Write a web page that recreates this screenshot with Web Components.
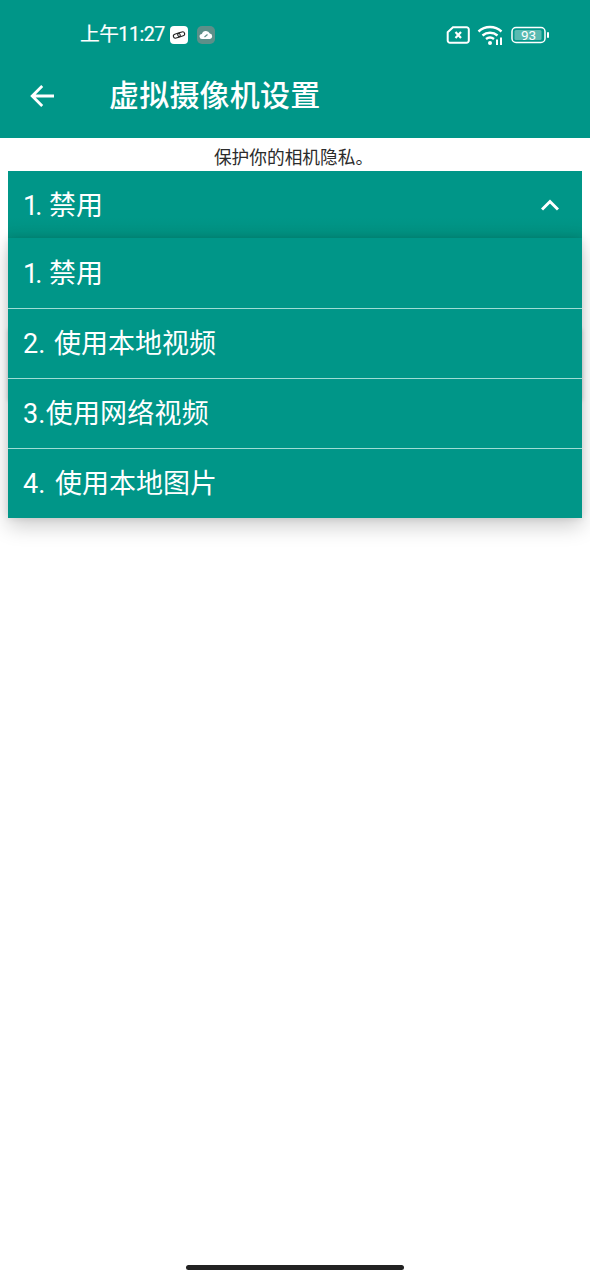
<!DOCTYPE html>
<html lang="zh">
<head>
<meta charset="utf-8">
<style>
html, body { margin: 0; padding: 0; background: #fff; }
body { width: 590px; height: 1280px; overflow: hidden; position: relative; font-family: Roboto, "Noto Sans CJK SC", sans-serif; }
.one { letter-spacing: -3px; }
</style>
</head>
<body>
<app-header title="虚拟摄像机设置"></app-header>
<hint-text>保护你的相机隐私。</hint-text>
<drop-select>
	<span slot="value"><span class="one">1</span>. 禁用</span>
	<drop-item><span class="one">1</span>. 禁用</drop-item>
	<drop-item style="word-spacing:2px">2. 使用本地视频</drop-item>
	<drop-item style="letter-spacing:0.2px">3.使用网络视频</drop-item>
	<drop-item style="word-spacing:3px">4. 使用本地图片</drop-item>
</drop-select>
<home-bar></home-bar>
<script>
class StatusBar extends HTMLElement {
	constructor() {
		super();
		this.attachShadow({ mode: "open" });
		this.shadowRoot.innerHTML = `<style>
:host { display: flex; align-items: center; height: 70px; box-sizing: border-box; padding: 0 41px 0 80px; color: #fff; }
#time { font-size: 19.700px; line-height: 70px; letter-spacing: -0.5px; -webkit-text-stroke: 0.2px #fff; }
#left { display: flex; align-items: center; }
#right { margin-left: auto; display: flex; align-items: center; }
svg { display: block; }
</style>
<div id="left">
	<span id="time">上午11:27</span>
	<svg style="margin-left:5px" width="18" height="18" viewBox="0 0 18 18">
		<rect width="18" height="18" rx="4" fill="#fff"/>
		<g fill="none" stroke="#222" stroke-width="1.100" transform="rotate(-18 9 9)">
			<rect x="3.200" y="7" width="7" height="4" rx="2"/>
			<rect x="7.800" y="7" width="7" height="4" rx="2"/>
		</g>
	</svg>
	<svg style="margin-left:9px" width="18" height="18" viewBox="0 0 18 18">
		<rect width="18" height="18" rx="5" fill="#5d8f89"/>
		<path d="M5.200 13a2.500 2.500 0 0 1-.3-5 4.200 4.200 0 0 1 7.900-.5 2.800 2.800 0 0 1 .2 5.500z" fill="#fff"/>
		<path d="M7.500 11l3-2.500" stroke="#5d8f89" stroke-width="1.100"/>
	</svg>
</div>
<div id="right">
	<svg width="24" height="18" viewBox="0 0 24 18">
		<path d="M7 1.200h13.500a2.300 2.300 0 0 1 2.300 2.300v11a2.300 2.300 0 0 1-2.300 2.300h-16.500a2.300 2.300 0 0 1-2.300-2.300v-8.300z" fill="none" stroke="#fff" stroke-width="2"/>
		<path d="M9.500 6l5.500 6M15 6l-5.500 6" stroke="#fff" stroke-width="2.200" fill="none"/>
	</svg>
	<svg style="margin-left:7px" width="28" height="22" viewBox="0 0 28 22">
		<g fill="none" stroke="#fff" stroke-width="2.400">
			<path d="M1.500 7.500a17 17 0 0 1 23 0"/>
			<path d="M5.500 11.500a11.500 11.500 0 0 1 15 0"/>
			<path d="M9 15a6.500 6.500 0 0 1 8 0"/>
		</g>
		<circle cx="13" cy="19" r="2" fill="#fff"/>
		<path d="M20 15.500v5.500M24 13.500v7.500" stroke="#fff" stroke-width="2" fill="none"/>
	</svg>
	<svg style="margin-left:6px" width="38" height="18" viewBox="0 0 38 18">
		<rect x="1" y="1.500" width="33" height="15" rx="4" fill="none" stroke="#fff" stroke-width="1.500"/>
		<rect x="3.500" y="4" width="27" height="10" rx="1.500" fill="#fff" fill-opacity="0.35"/>
		<rect x="36" y="6" width="2" height="6" rx="1" fill="#fff"/>
		<text x="17.500" y="13.800" text-anchor="middle" font-family="Roboto" font-size="13.500" fill="#fff">93</text>
	</svg>
</div>`;
	}
}
customElements.define("status-bar", StatusBar);

class AppHeader extends HTMLElement {
	constructor() {
		super();
		this.attachShadow({ mode: "open" });
		this.shadowRoot.innerHTML = `<style>
:host { display: block; background: #009688; color: #fff; height: 138px; }
#bar { display: flex; align-items: center; height: 52px; padding-left: 30px; }
#back { display: block; flex: none; width: 24px; height: 24px; }
h1 { margin: 0 0 0 55px; font-size: 30px; font-weight: 500; line-height: 52px; letter-spacing: 0.2px; }
</style>
<status-bar></status-bar>
<div id="bar">
	<svg id="back" viewBox="0 0 24 24" fill="none" stroke="#fff" stroke-width="2.800">
		<path d="M24 12H2.500M12.200 2L2.200 12l10 10"/>
	</svg>
	<h1></h1>
</div>`;
		this.shadowRoot.querySelector("h1").textContent = this.getAttribute("title");
	}
}
customElements.define("app-header", AppHeader);

class HintText extends HTMLElement {
	constructor() {
		super();
		this.attachShadow({ mode: "open" });
		this.shadowRoot.innerHTML = `<style>
:host { display: block; height: 33px; line-height: 40px; padding-right: 3px; text-align: center; font-size: 17.700px; color: #2b2b2b; }
</style><slot></slot>`;
	}
}
customElements.define("hint-text", HintText);

class DropItem extends HTMLElement {
	constructor() {
		super();
		this.attachShadow({ mode: "open" });
		this.shadowRoot.innerHTML = `<style>
:host { display: block; height: 70px; box-sizing: border-box; padding-left: 15px; line-height: 71px; font-size: 27px; color: #fff; border-bottom: 1px solid #9fdcd5; }
:host(:last-child) { border-bottom: 0; height: 69px; }
</style><slot></slot>`;
	}
}
customElements.define("drop-item", DropItem);

class DropSelect extends HTMLElement {
	constructor() {
		super();
		this.attachShadow({ mode: "open" });
		this.shadowRoot.innerHTML = `<style>
:host { display: block; position: relative; margin: 0 8px; height: 67px; background: #009688; color: #fff; }
#head { display: flex; align-items: center; height: 64px; padding: 0 23px 3px 15px; font-size: 27px; background: linear-gradient(#009688 70%, #00907f); }
#head svg { margin-left: auto; margin-top: 4px; display: block; }
/* the card hidden under the open list */
#under { position: absolute; left: 0; right: 0; top: 157px; height: 72px; background: #fff; box-shadow: 0 1px 4px rgba(0,0,0,0.18); }
#list { position: absolute; left: 0; right: 0; top: 67px; border-top: 1px solid #009688; background: #009688; box-shadow: 0 8px 20px rgba(0,0,0,0.2), 0 0 7px rgba(0,0,0,0.1); }
</style>
<div id="under"></div>
<div id="head"><slot name="value"></slot>
	<svg width="18" height="12" viewBox="0 0 18 12" fill="none" stroke="#fff" stroke-width="3"><path d="M1 10.500l8-8 8 8"/></svg>
</div>
<div id="list"><slot></slot></div>`;
	}
}
customElements.define("drop-select", DropSelect);

class HomeBar extends HTMLElement {
	constructor() {
		super();
		this.attachShadow({ mode: "open" });
		this.shadowRoot.innerHTML = `<style>
:host { display: block; position: absolute; left: 186px; bottom: 10px; width: 218px; height: 5px; border-radius: 3px; background: #222; }
</style>`;
	}
}
customElements.define("home-bar", HomeBar);
</script>
</body>
</html>
